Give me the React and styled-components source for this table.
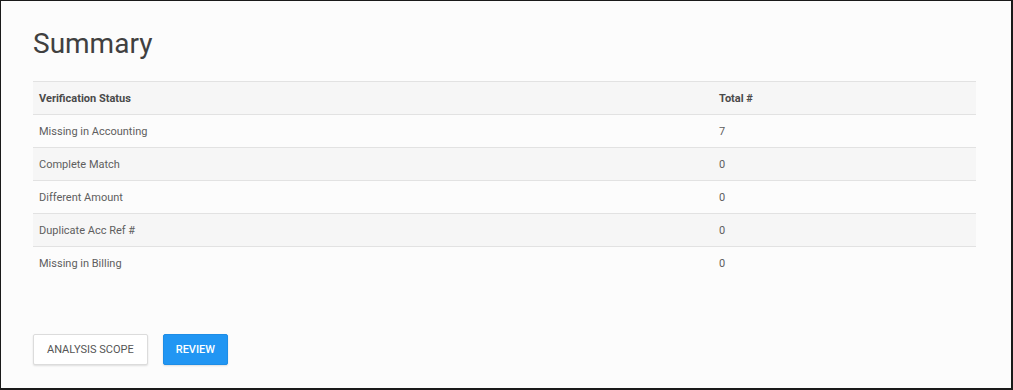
import React from 'react'
import styled, { createGlobalStyle } from 'styled-components'

const GlobalStyle = createGlobalStyle`
  html, body {
    margin: 0;
    padding: 0;
    background: #ffffff;
  }
  body {
    font-family: Roboto, 'Liberation Sans', Arial, sans-serif;
  }
`

const Panel = styled.div`
  box-sizing: border-box;
  width: 1013px;
  height: 390px;
  background: #fcfcfc;
  border: 1px solid #1a1a1a;
  border-right-width: 2px;
  border-bottom-width: 2px;
  padding: 27px 35px 0 32px;
  display: flex;
  flex-direction: column;
`

const Title = styled.h1`
  margin: 0 0 21px;
  font-size: 28px;
  line-height: 32px;
  font-weight: 400;
  color: #404040;
`

const Table = styled.table`
  width: 100%;
  border-collapse: collapse;
  font-size: 11px;
  color: #5e5e5e;
`

const Row = styled.tr`
  height: 33px;
  border-top: 1px solid #e2e2e2;
  background: ${(p) => (p.$shaded ? '#f6f6f6' : 'transparent')};
`

const HeadCell = styled.th`
  text-align: left;
  font-weight: 700;
  color: #4a4a4a;
  padding: 0 6px;
  width: ${(p) => p.$width || 'auto'};
`

const Cell = styled.td`
  padding: 0 6px;
`

const Actions = styled.div`
  display: flex;
  gap: 15px;
  margin-top: 54px;
`

const Button = styled.button`
  box-sizing: border-box;
  height: 31px;
  padding: 0 ${(p) => (p.$primary ? '12px' : '13px')};
  font-family: Roboto, 'Liberation Sans', Arial, sans-serif;
  font-size: 11px;
  font-weight: ${(p) => (p.$primary ? 500 : 400)};
  text-transform: uppercase;
  border-radius: 2px;
  cursor: pointer;
  color: ${(p) => (p.$primary ? '#ffffff' : '#555555')};
  background: ${(p) => (p.$primary ? '#2196f3' : '#ffffff')};
  border: 1px solid ${(p) => (p.$primary ? '#1e8de6' : '#dcdcdc')};
  box-shadow: 0 1px 2px rgba(0, 0, 0, 0.12);
`

const rows = [
  { status: 'Missing in Accounting', total: 7 },
  { status: 'Complete Match', total: 0 },
  { status: 'Different Amount', total: 0 },
  { status: 'Duplicate Acc Ref #', total: 0 },
  { status: 'Missing in Billing', total: 0 },
]

const App = () => {
  return (
    <>
      <GlobalStyle />
      <Panel>
        <Title>Summary</Title>
        <Table>
          <thead>
            <Row $shaded>
              <HeadCell $width="668px">Verification Status</HeadCell>
              <HeadCell>Total #</HeadCell>
            </Row>
          </thead>
          <tbody>
            {rows.map((r, i) => (
              <Row key={r.status} $shaded={i % 2 === 1}>
                <Cell>{r.status}</Cell>
                <Cell>{r.total}</Cell>
              </Row>
            ))}
          </tbody>
        </Table>
        <Actions>
          <Button>Analysis Scope</Button>
          <Button $primary>Review</Button>
        </Actions>
      </Panel>
    </>
  )
}

export default App
